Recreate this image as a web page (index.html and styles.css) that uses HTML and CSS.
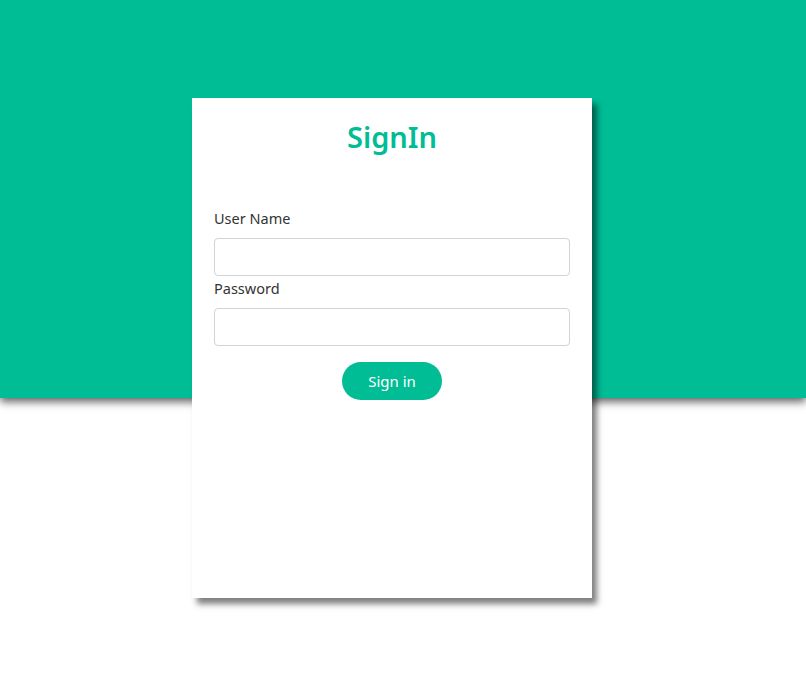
FILE: index.html
```html
<!DOCTYPE html>
<html lang="en">
<head>
<meta charset="utf-8">
<title>SignIn</title>
<link rel="stylesheet" href="styles.css">
</head>
<body>
<div class="page">
  <header class="banner"></header>
  <form class="card">
    <h1 class="title">SignIn</h1>
    <label class="label" for="user">User Name</label>
    <input class="field" id="user" type="text">
    <label class="label label-second" for="pass">Password</label>
    <input class="field" id="pass" type="password">
    <div class="actions">
      <button class="btn" type="button">Sign in</button>
    </div>
  </form>
</div>
</body>
</html>
```
FILE: styles.css
```css
body {
  margin: 0;
  padding: 0;
  font-family: "Noto Sans", "Open Sans", sans-serif;
  color: #333333;
  background: #ffffff;
}

.page {
  display: grid;
  grid-template-columns: 192px 400px 1fr;
  grid-template-rows: 98px 300px 200px 1fr;
  min-height: 100vh;
}

.banner {
  grid-column: 1 / -1;
  grid-row: 1 / 3;
  background: #01bd95;
  box-shadow: 0 4px 8px rgba(0, 0, 0, 0.6);
}

.card {
  grid-column: 2;
  grid-row: 2 / 4;
  box-sizing: border-box;
  margin: 0;
  padding: 19px 22px 0;
  background: #ffffff;
  box-shadow: 5px 6px 6px rgba(0, 0, 0, 0.5);
  display: flex;
  flex-direction: column;
}

.title {
  margin: 0 0 51px;
  text-align: center;
  font-size: 29px;
  font-weight: 600;
  line-height: 40px;
  color: #01bd95;
}

.label {
  font-size: 14.5px;
  line-height: 20px;
  margin-bottom: 10px;
  color: #333333;
}

.label-second {
  margin-top: 2px;
}

.field {
  width: 356px;
  height: 38px;
  box-sizing: border-box;
  border: 1px solid #cfd4d8;
  border-radius: 4px;
  padding: 6px 12px;
  font: inherit;
  background: #ffffff;
}

.actions {
  display: flex;
  justify-content: center;
  margin-top: 16px;
}

.btn {
  width: 100px;
  height: 38px;
  border: none;
  border-radius: 19px;
  background: #01bd95;
  color: #ffffff;
  font-family: "Noto Sans", "Open Sans", sans-serif;
  font-size: 15px;
  cursor: pointer;
}
```
